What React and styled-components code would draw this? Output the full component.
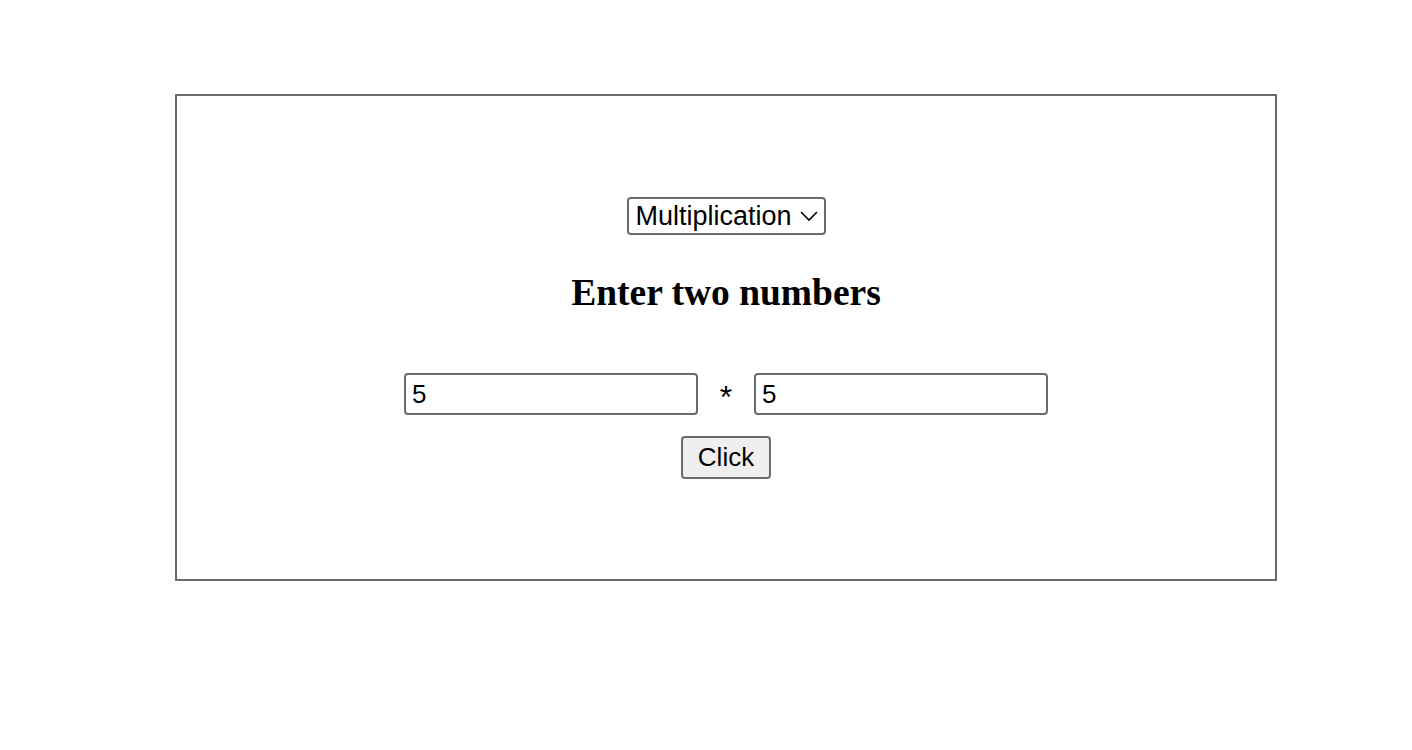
import React, { useState } from 'react'
import styled, { createGlobalStyle } from 'styled-components'

const Global = createGlobalStyle`
  body {
    margin: 0;
    background: #ffffff;
    font-family: "Liberation Serif", serif;
  }
`

const Frame = styled.div`
  box-sizing: border-box;
  width: 1102px;
  margin: 94px 0 0 175px;
  border: 2px solid #6b6b6b;
  padding: 101px 0 100px;
  display: flex;
  flex-direction: column;
  align-items: center;
`

const SelectWrap = styled.div`
  position: relative;
  display: inline-flex;
`

const Select = styled.select`
  appearance: none;
  box-sizing: border-box;
  width: 199px;
  height: 38px;
  padding: 0 20px 0 7px;
  border: 2px solid #6b6b6b;
  border-radius: 4px;
  background: #fff;
  font-family: "Liberation Sans", Arial, sans-serif;
  font-size: 27px;
  color: #000;
`

const Chevron = styled.svg`
  position: absolute;
  right: 7px;
  top: 13px;
  pointer-events: none;
`

const Heading = styled.h1`
  margin: 36px 0 0;
  font-family: "Liberation Serif", "Times New Roman", serif;
  font-weight: bold;
  font-size: 37.5px;
  line-height: 43px;
  color: #000;
`

const Row = styled.div`
  margin-top: 59px;
  display: flex;
  align-items: center;
`

const NumInput = styled.input`
  box-sizing: border-box;
  width: 294px;
  height: 42px;
  padding: 0 6px;
  border: 2px solid #6b6b6b;
  border-radius: 4px;
  font-family: "Liberation Sans", Arial, sans-serif;
  font-size: 26px;
  color: #000;
`

const Op = styled.span`
  width: 56px;
  text-align: center;
  font-family: "Liberation Sans", Arial, sans-serif;
  font-size: 32px;
  line-height: 32px;
  padding-top: 6px;
  color: #000;
`

const Button = styled.button`
  box-sizing: border-box;
  margin-top: 21px;
  width: 90px;
  height: 43px;
  padding: 0;
  border: 2px solid #6b6b6b;
  border-radius: 4px;
  background: #efefef;
  font-family: "Liberation Sans", Arial, sans-serif;
  font-size: 26px;
  color: #000;
`

export default function App() {
  const [op, setOp] = useState('Multiplication')
  const [a, setA] = useState('5')
  const [b, setB] = useState('5')
  const sign = { Addition: '+', Subtraction: '-', Multiplication: '*', Division: '/' }[op]
  return (
    <>
      <Global />
      <Frame>
        <SelectWrap>
          <Select value={op} onChange={e => setOp(e.target.value)}>
            <option>Addition</option>
            <option>Subtraction</option>
            <option>Multiplication</option>
            <option>Division</option>
          </Select>
          <Chevron width="20" height="12" viewBox="0 0 20 12">
            <path d="M2 2 L10 10 L18 2" fill="none" stroke="#000" strokeWidth="1.6" />
          </Chevron>
        </SelectWrap>
        <Heading>Enter two numbers</Heading>
        <Row>
          <NumInput value={a} onChange={e => setA(e.target.value)} />
          <Op>{sign}</Op>
          <NumInput value={b} onChange={e => setB(e.target.value)} />
        </Row>
        <Button>Click</Button>
      </Frame>
    </>
  )
}
